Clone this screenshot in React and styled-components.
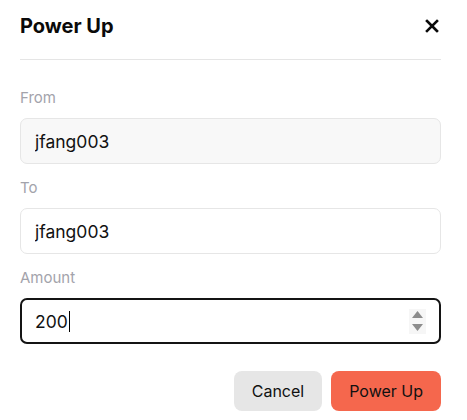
import React from 'react';
import styled, { createGlobalStyle } from 'styled-components';

const GlobalStyle = createGlobalStyle`
  html, body {
    margin: 0;
    padding: 0;
    background: #ffffff;
    font-family: Inter, "Liberation Sans", Arial, sans-serif;
    color: #111111;
  }
  * { box-sizing: border-box; }
`;

const Modal = styled.div`
  width: 467px;
  padding: 0 26px 8px 20px;
`;

const Header = styled.div`
  display: flex;
  align-items: center;
  justify-content: space-between;
  height: 60px;
  padding-bottom: 8px;
  border-bottom: 1px solid #e5e5e5;
`;

const Title = styled.h2`
  margin: 0;
  font-size: 20px;
  line-height: 24px;
  font-weight: 700;
  color: #0a0a0a;
`;

const CloseButton = styled.button`
  border: none;
  background: none;
  padding: 0;
  width: 24px;
  height: 24px;
  display: flex;
  align-items: center;
  justify-content: center;
  margin-right: -3px;
  cursor: pointer;
`;

const Body = styled.div`
  display: flex;
  flex-direction: column;
  gap: 13px;
  padding-top: 27px;
`;

const Field = styled.div`
  display: flex;
  flex-direction: column;
  gap: 9px;
`;

const Label = styled.label`
  font-size: 15px;
  line-height: 22px;
  color: #a3a3ab;
`;

const Input = styled.input`
  height: 46px;
  width: 100%;
  padding: 0 14px;
  border: 1px solid #e6e6e6;
  border-radius: 7px;
  background: ${p => (p.$muted ? '#f8f8f8' : '#ffffff')};
  font-family: inherit;
  font-size: 17.5px;
  color: #111111;
  outline: none;
`;

const ActiveBox = styled.div`
  height: 46px;
  display: flex;
  align-items: center;
  padding: 0 13px 0 13px;
  border: 2px solid #141414;
  border-radius: 7px;
  font-size: 17.5px;
  color: #111111;
`;

const Value = styled.span`
  flex: 1;
  display: flex;
  align-items: center;
`;

const Caret = styled.span`
  display: inline-block;
  width: 1.5px;
  height: 21px;
  background: #000;
  margin-left: 1px;
`;

const Spinner = styled.div`
  width: 17px;
  height: 25px;
  background: #f6f6f6;
  display: flex;
  flex-direction: column;
  align-items: center;
  justify-content: center;
  gap: 6px;
`;

const Actions = styled.div`
  display: flex;
  justify-content: flex-end;
  gap: 9px;
  margin-top: 27px;
`;

const Button = styled.button`
  height: 40px;
  padding: 0 18px;
  border: none;
  border-radius: 8px;
  font-family: inherit;
  font-size: 16px;
  color: #111111;
  background: ${p => (p.$primary ? '#f5674d' : '#e6e6e6')};
  cursor: pointer;
`;

export default function App() {
  return (
    <>
      <GlobalStyle />
      <Modal>
        <Header>
          <Title>Power Up</Title>
          <CloseButton aria-label="Close">
            <svg width="14" height="14" viewBox="0 0 14 14">
              <path d="M2 2 L12 12 M12 2 L2 12" stroke="#0a0a0a" strokeWidth="2.6" strokeLinecap="square" />
            </svg>
          </CloseButton>
        </Header>
        <Body>
          <Field>
            <Label>From</Label>
            <Input $muted readOnly value="jfang003" />
          </Field>
          <Field>
            <Label>To</Label>
            <Input readOnly value="jfang003" />
          </Field>
          <Field>
            <Label>Amount</Label>
            <ActiveBox>
              <Value>200<Caret /></Value>
              <Spinner>
                <svg width="11" height="7" viewBox="0 0 11 7"><path d="M5.5 0 L11 7 L0 7 Z" fill="#8c8c8c" /></svg>
                <svg width="11" height="7" viewBox="0 0 11 7"><path d="M0 0 L11 0 L5.5 7 Z" fill="#8c8c8c" /></svg>
              </Spinner>
            </ActiveBox>
          </Field>
        </Body>
        <Actions>
          <Button>Cancel</Button>
          <Button $primary>Power Up</Button>
        </Actions>
      </Modal>
    </>
  );
}
